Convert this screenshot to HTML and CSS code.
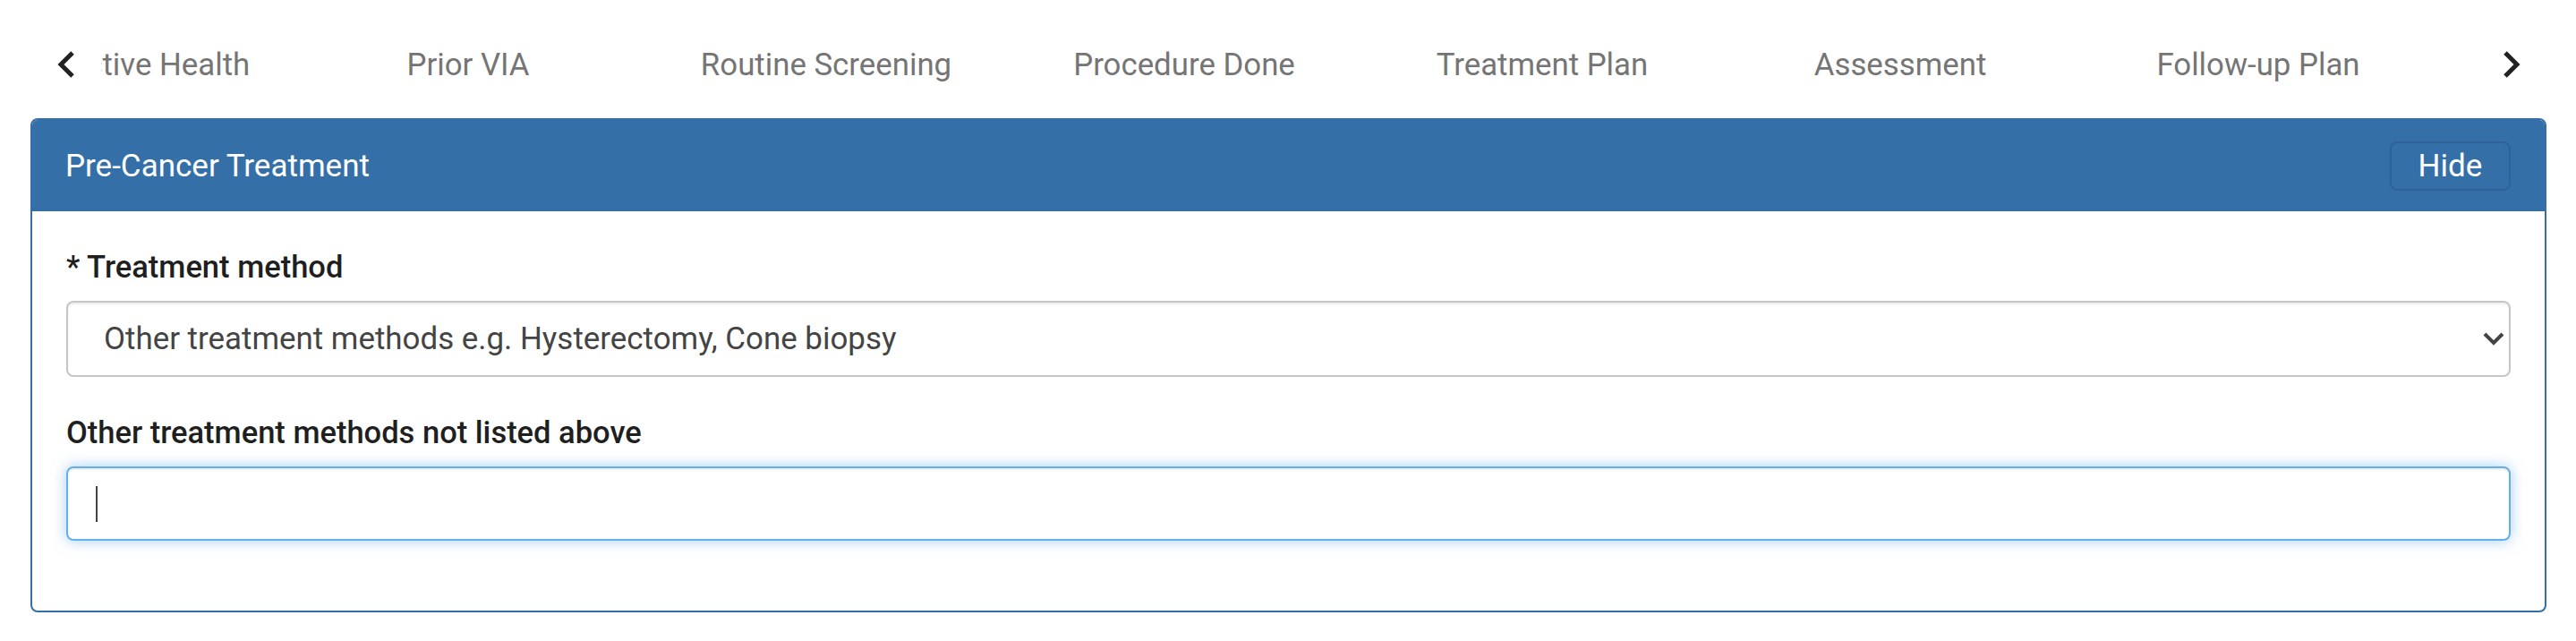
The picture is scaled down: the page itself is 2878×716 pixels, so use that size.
FILE: index.html
```html
<!DOCTYPE html>
<html>
<head>
<meta charset="utf-8">
<link rel="stylesheet" href="styles.css">
</head>
<body>
<nav class="steps">
  <button class="step-arrow" aria-label="Previous">
    <svg width="20" height="30" viewBox="0 0 20 30"><path d="M17 2 L4 15 L17 28" fill="none" stroke="#222" stroke-width="5"/></svg>
  </button>
  <div class="steps-viewport">
    <div class="steps-track">
      <div class="step">Reproductive Health</div>
      <div class="step">Prior VIA</div>
      <div class="step">Routine Screening</div>
      <div class="step">Procedure Done</div>
      <div class="step">Treatment Plan</div>
      <div class="step">Assessment</div>
      <div class="step">Follow-up Plan</div>
    </div>
  </div>
  <button class="step-arrow" aria-label="Next">
    <svg width="20" height="30" viewBox="0 0 20 30"><path d="M3 2 L16 15 L3 28" fill="none" stroke="#222" stroke-width="5"/></svg>
  </button>
</nav>

<section class="panel">
  <header class="panel-heading">
    <h2 class="panel-title">Pre-Cancer Treatment</h2>
    <button class="btn-hide">Hide</button>
  </header>
  <div class="panel-body">
    <div class="form-group">
      <label class="control-label">* Treatment method</label>
      <div class="select-wrap">
        <select class="form-control">
          <option>Other treatment methods e.g. Hysterectomy, Cone biopsy</option>
        </select>
        <svg class="select-caret" width="24" height="16" viewBox="0 0 24 16"><path d="M2 2 L12 12 L22 2" fill="none" stroke="#444" stroke-width="4"/></svg>
      </div>
    </div>
    <div class="form-group">
      <label class="control-label">Other treatment methods not listed above</label>
      <div class="input-wrap">
        <input class="form-control focused" type="text">
        <span class="text-caret"></span>
      </div>
    </div>
  </div>
</section>
</body>
</html>
```
FILE: styles.css
```css
* { box-sizing: border-box; }
body {
  margin: 0;
  background: #fff;
  font-family: Roboto, "Liberation Sans", sans-serif;
}
.steps {
  display: flex;
  align-items: center;
  height: 124px;
  padding: 20px 62px 0 64px;
  margin-bottom: 8px;
}
.step-arrow {
  flex: none;
  width: 20px;
  height: 30px;
  padding: 0;
  border: 0;
  background: none;
  display: flex;
}
.steps-viewport {
  flex: 1;
  overflow: hidden;
  margin: 0 18px 0 29px;
}
.steps-track {
  display: flex;
  margin-left: -190px;
}
.step {
  flex: none;
  width: 400px;
  text-align: center;
  font-size: 34.8px;
  line-height: 50px;
  color: #757575;
  white-space: nowrap;
}
.panel {
  margin: 0 33px 0 34px;
  border: 2px solid #356fa8;
  border-radius: 8px;
  overflow: hidden;
}
.panel-heading {
  display: flex;
  align-items: center;
  justify-content: space-between;
  height: 102px;
  padding: 0 38px 0 37px;
  background: #356fa8;
}
.panel-title {
  margin: 0;
  font-size: 35px;
  font-weight: 400;
  color: #fff;
}
.btn-hide {
  width: 135px;
  height: 55px;
  padding: 0;
  border: 2px solid #2e6495;
  border-radius: 8px;
  background: #356fa8;
  color: #fff;
  font-family: Roboto, "Liberation Sans", sans-serif;
  font-size: 35px;
}
.panel-body {
  padding: 37px 38px 78px;
}
.form-group + .form-group {
  margin-top: 37px;
}
.control-label {
  display: block;
  font-size: 34.5px;
  line-height: 50px;
  font-weight: 500;
  color: #1f1f1f;
  margin-bottom: 13px;
}
.form-control {
  display: block;
  width: 100%;
  height: 85px;
  padding: 0 40px;
  border: 2px solid #c6c6c6;
  border-radius: 8px;
  background: #fff;
  box-shadow: inset 0 2px 2px rgba(0,0,0,.075);
  font-family: Roboto, "Liberation Sans", sans-serif;
  font-size: 34.9px;
  color: #444;
  outline: none;
}
select.form-control {
  appearance: none;
  -webkit-appearance: none;
}
.select-wrap, .input-wrap { position: relative; }
.select-caret {
  position: absolute;
  right: 7px;
  top: 35px;
  pointer-events: none;
}
.form-control.focused {
  height: 83px;
  border-color: #66afe9;
  box-shadow: inset 0 2px 2px rgba(0,0,0,.075), 0 0 16px rgba(102,175,233,.6);
}
.text-caret {
  position: absolute;
  left: 33px;
  top: 22px;
  width: 2px;
  height: 40px;
  background: #444;
}
```
